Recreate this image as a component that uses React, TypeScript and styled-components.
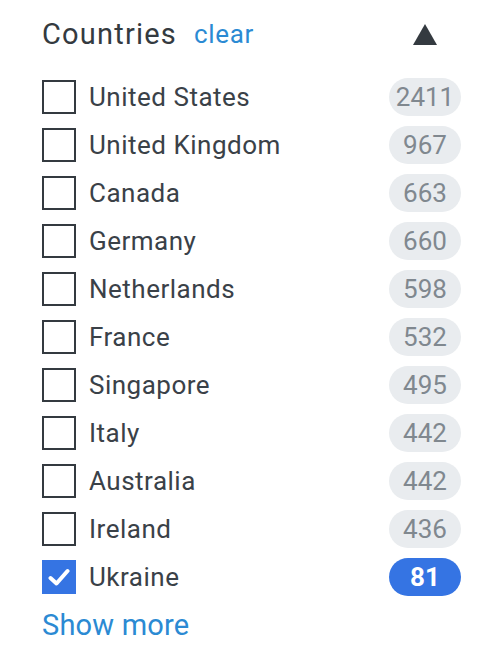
import styled, { createGlobalStyle } from "styled-components";

const GlobalStyle = createGlobalStyle`
  body {
    margin: 0;
    background: #fff;
    font-family: Roboto, "Liberation Sans", sans-serif;
  }
`;

const Panel = styled.div`
  width: 487px;
  padding: 14px 26px 0 42px;
  box-sizing: border-box;
`;

const Header = styled.div`
  display: flex;
  align-items: center;
  height: 40px;
  margin-bottom: 19px;
`;

const Title = styled.h3`
  margin: 0;
  font-size: 29px;
  font-weight: 400;
  color: #343a40;
  letter-spacing: 1.2px;
`;

const Clear = styled.a`
  margin-left: 17px;
  font-size: 26px;
  color: #2b8ad3;
  letter-spacing: 0.7px;
  cursor: pointer;
`;

const Toggle = styled.div`
  margin-left: auto;
  margin-right: 24px;
  width: 0;
  height: 0;
  border-left: 12px solid transparent;
  border-right: 12px solid transparent;
  border-bottom: 21px solid #343a40;
`;

const List = styled.ul`
  list-style: none;
  margin: 0;
  padding: 0;
`;

const Row = styled.li`
  display: flex;
  align-items: center;
  height: 48px;
`;

const Box = styled.span<{ $checked?: boolean }>`
  width: 34px;
  height: 34px;
  box-sizing: border-box;
  border: 2px solid ${(p) => (p.$checked ? "#3574e3" : "#343a40")};
  background: ${(p) => (p.$checked ? "#3574e3" : "#fff")};
  display: flex;
  align-items: center;
  justify-content: center;
  flex-shrink: 0;
`;

const Label = styled.span`
  margin-left: 13px;
  font-size: 26px;
  letter-spacing: 0.5px;
  color: #3a4148;
  flex: 1;
`;

const Count = styled.span<{ $active?: boolean }>`
  width: 72px;
  height: 38px;
  border-radius: 19px;
  background: ${(p) => (p.$active ? "#3574e3" : "#e9ecef")};
  color: ${(p) => (p.$active ? "#fff" : "#80888f")};
  font-weight: ${(p) => (p.$active ? 700 : 400)};
  font-size: 26px;
  display: flex;
  align-items: center;
  justify-content: center;
`;

const ShowMore = styled.a`
  display: block;
  margin-top: 7px;
  font-size: 29px;
  letter-spacing: 0.2px;
  color: #2b8ad3;
  cursor: pointer;
`;

const countries = [
  { name: "United States", count: 2411 },
  { name: "United Kingdom", count: 967 },
  { name: "Canada", count: 663 },
  { name: "Germany", count: 660 },
  { name: "Netherlands", count: 598 },
  { name: "France", count: 532 },
  { name: "Singapore", count: 495 },
  { name: "Italy", count: 442 },
  { name: "Australia", count: 442 },
  { name: "Ireland", count: 436 },
  { name: "Ukraine", count: 81, checked: true },
];

const Check = () => (
  <svg width="22" height="19" viewBox="0 0 22 19">
    <path
      d="M2.5 10 L8.5 15.5 L19.5 3"
      fill="none"
      stroke="#fff"
      strokeWidth="4"
      strokeLinecap="round"
      strokeLinejoin="round"
    />
  </svg>
);

const App = () => {
  return (
    <>
      <GlobalStyle />
      <Panel>
        <Header>
          <Title>Countries</Title>
          <Clear>clear</Clear>
          <Toggle />
        </Header>
        <List>
          {countries.map((c) => (
            <Row key={c.name}>
              <Box $checked={c.checked}>{c.checked && <Check />}</Box>
              <Label>{c.name}</Label>
              <Count $active={c.checked}>{c.count}</Count>
            </Row>
          ))}
        </List>
        <ShowMore>Show more</ShowMore>
      </Panel>
    </>
  );
};
export default App;
